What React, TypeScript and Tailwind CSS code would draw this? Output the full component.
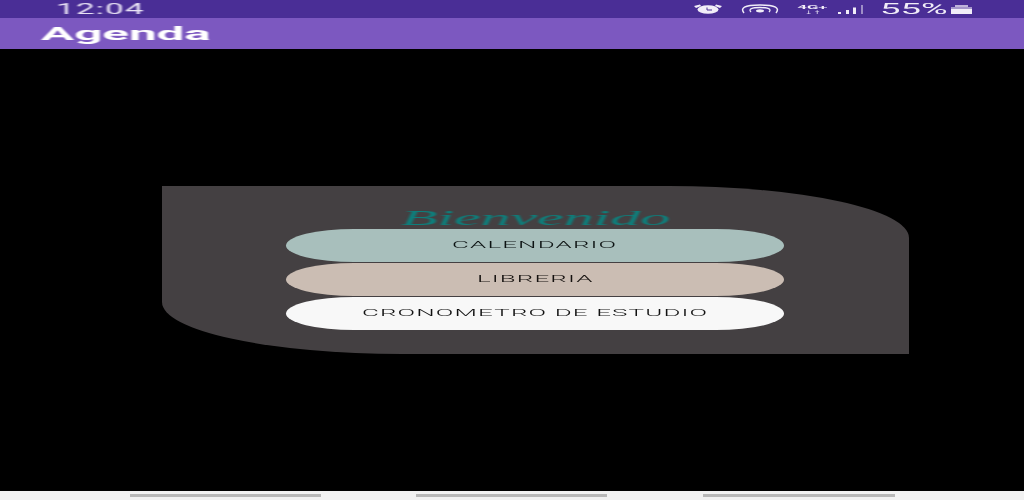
const menu = [
  { label: "CALENDARIO", bg: "bg-[#a8bfbc]", text: "text-[#0c1212]" },
  { label: "LIBRERIA", bg: "bg-[#cbbdb3]", text: "text-[#14100e]" },
  { label: "CRONOMETRO DE ESTUDIO", bg: "bg-[#f8f8f8]", text: "text-[#111111]" },
];

function StatusIcons() {
  return (
    <div className="flex items-center text-[#f1edf8] blur-[0.5px]">
      {/* alarm */}
      <svg width="30" height="10" viewBox="0 0 30 10" className="ml-[693px]">
        <path d="M1 2 L7 0.5 L8 2 L3 4Z M29 2 L23 0.5 L22 2 L27 4Z" fill="currentColor" />
        <ellipse cx="15" cy="5.5" rx="10.5" ry="4.3" fill="currentColor" />
        <path d="M14 3.5 V6 H19" stroke="#4a2e96" strokeWidth="1" fill="none" />
      </svg>
      {/* hotspot */}
      <svg width="38" height="10" viewBox="0 0 38 10" className="ml-[18px]" fill="none" stroke="currentColor">
        <path d="M3 9 C-1 4 3 1 19 1 C35 1 39 4 35 9" strokeWidth="1.5" />
        <path d="M10 8 C7 5 11 3.5 19 3.5 C27 3.5 31 5 28 8" strokeWidth="1.3" />
        <ellipse cx="19" cy="6.8" rx="4" ry="1.6" fill="currentColor" stroke="none" />
      </svg>
      {/* 4G+ */}
      <div className="ml-[19px] flex w-[29px] flex-col items-center text-[6px] font-bold leading-[5px]">
        <span className="scale-x-[2.8]">4G+</span>
        <span className="scale-x-[2.8]">↓↑</span>
      </div>
      {/* signal */}
      <svg width="27" height="9" viewBox="0 0 27 9" className="ml-[10px]" fill="currentColor">
        <rect x="1" y="7" width="3" height="2" />
        <rect x="9" y="5" width="3" height="4" />
        <rect x="16" y="2.5" width="3" height="6.5" />
        <rect x="24" y="0" width="2" height="9" opacity="0.5" />
      </svg>
      <span className="ml-[16px] w-[65px] origin-left scale-x-[2.6] text-[14px] leading-none whitespace-nowrap">
        55%
      </span>
      {/* battery */}
      <svg width="21" height="9" viewBox="0 0 21 9" className="ml-[6px]" fill="currentColor">
        <rect x="4" y="0" width="13" height="2" opacity="0.7" />
        <rect x="0" y="2" width="21" height="3" opacity="0.55" />
        <rect x="0" y="4" width="21" height="5" />
      </svg>
    </div>
  );
}

export default function App() {
  return (
    <div className="flex h-[500px] w-[1024px] flex-col overflow-hidden bg-black font-['Roboto',sans-serif]">
      <div className="relative flex h-[18px] items-center bg-[#4a2e96]">
        <span className="absolute left-[56px] top-[2px] origin-left scale-x-[2.38] text-[14px] leading-[14px] tracking-[0.5px] text-[#e8e2f4] blur-[0.4px]">
          12:04
        </span>
        <StatusIcons />
      </div>
      <div className="flex h-[31px] items-center bg-[#7c58c0] pl-[41px]">
        <span className="origin-left scale-x-[2.74] text-[18px] font-bold leading-none text-white blur-[0.4px]">
          Agenda
        </span>
      </div>

      <main className="flex flex-1 flex-col pl-[162px] pt-[137px]">
        <div className="flex h-[168px] w-[747px] flex-col items-center rounded-tr-[240px_52px] rounded-bl-[240px_52px] bg-[#444042]">
          <div className="mt-[20px] flex h-[23px] items-end justify-center font-['Liberation_Serif',serif] text-[22px] italic leading-[22px] text-[#0d7f7c]">
            <span className="inline-block whitespace-nowrap scale-x-[2.72] blur-[0.6px]">Bienvenido</span>
          </div>
          <div className="mr-[1px] flex w-[498px] flex-col gap-[1px]">
            {menu.map((item) => (
              <button
                key={item.label}
                className={`flex h-[33px] items-center justify-center rounded-[68px/16.5px] ${item.bg} ${item.text}`}
              >
                <span className="scale-x-[2.88] whitespace-nowrap text-[9px] font-light tracking-[0.4px]">
                  {item.label}
                </span>
              </button>
            ))}
          </div>
        </div>
      </main>

      <div className="flex h-[9px] items-center bg-[#f2f2f2] pl-[130px]">
        <div className="h-[3px] w-[191px] bg-[#b8b8b8]" />
        <div className="ml-[95px] h-[3px] w-[191px] bg-[#b8b8b8]" />
        <div className="ml-[96px] h-[3px] w-[192px] bg-[#b8b8b8]" />
      </div>
    </div>
  );
}
